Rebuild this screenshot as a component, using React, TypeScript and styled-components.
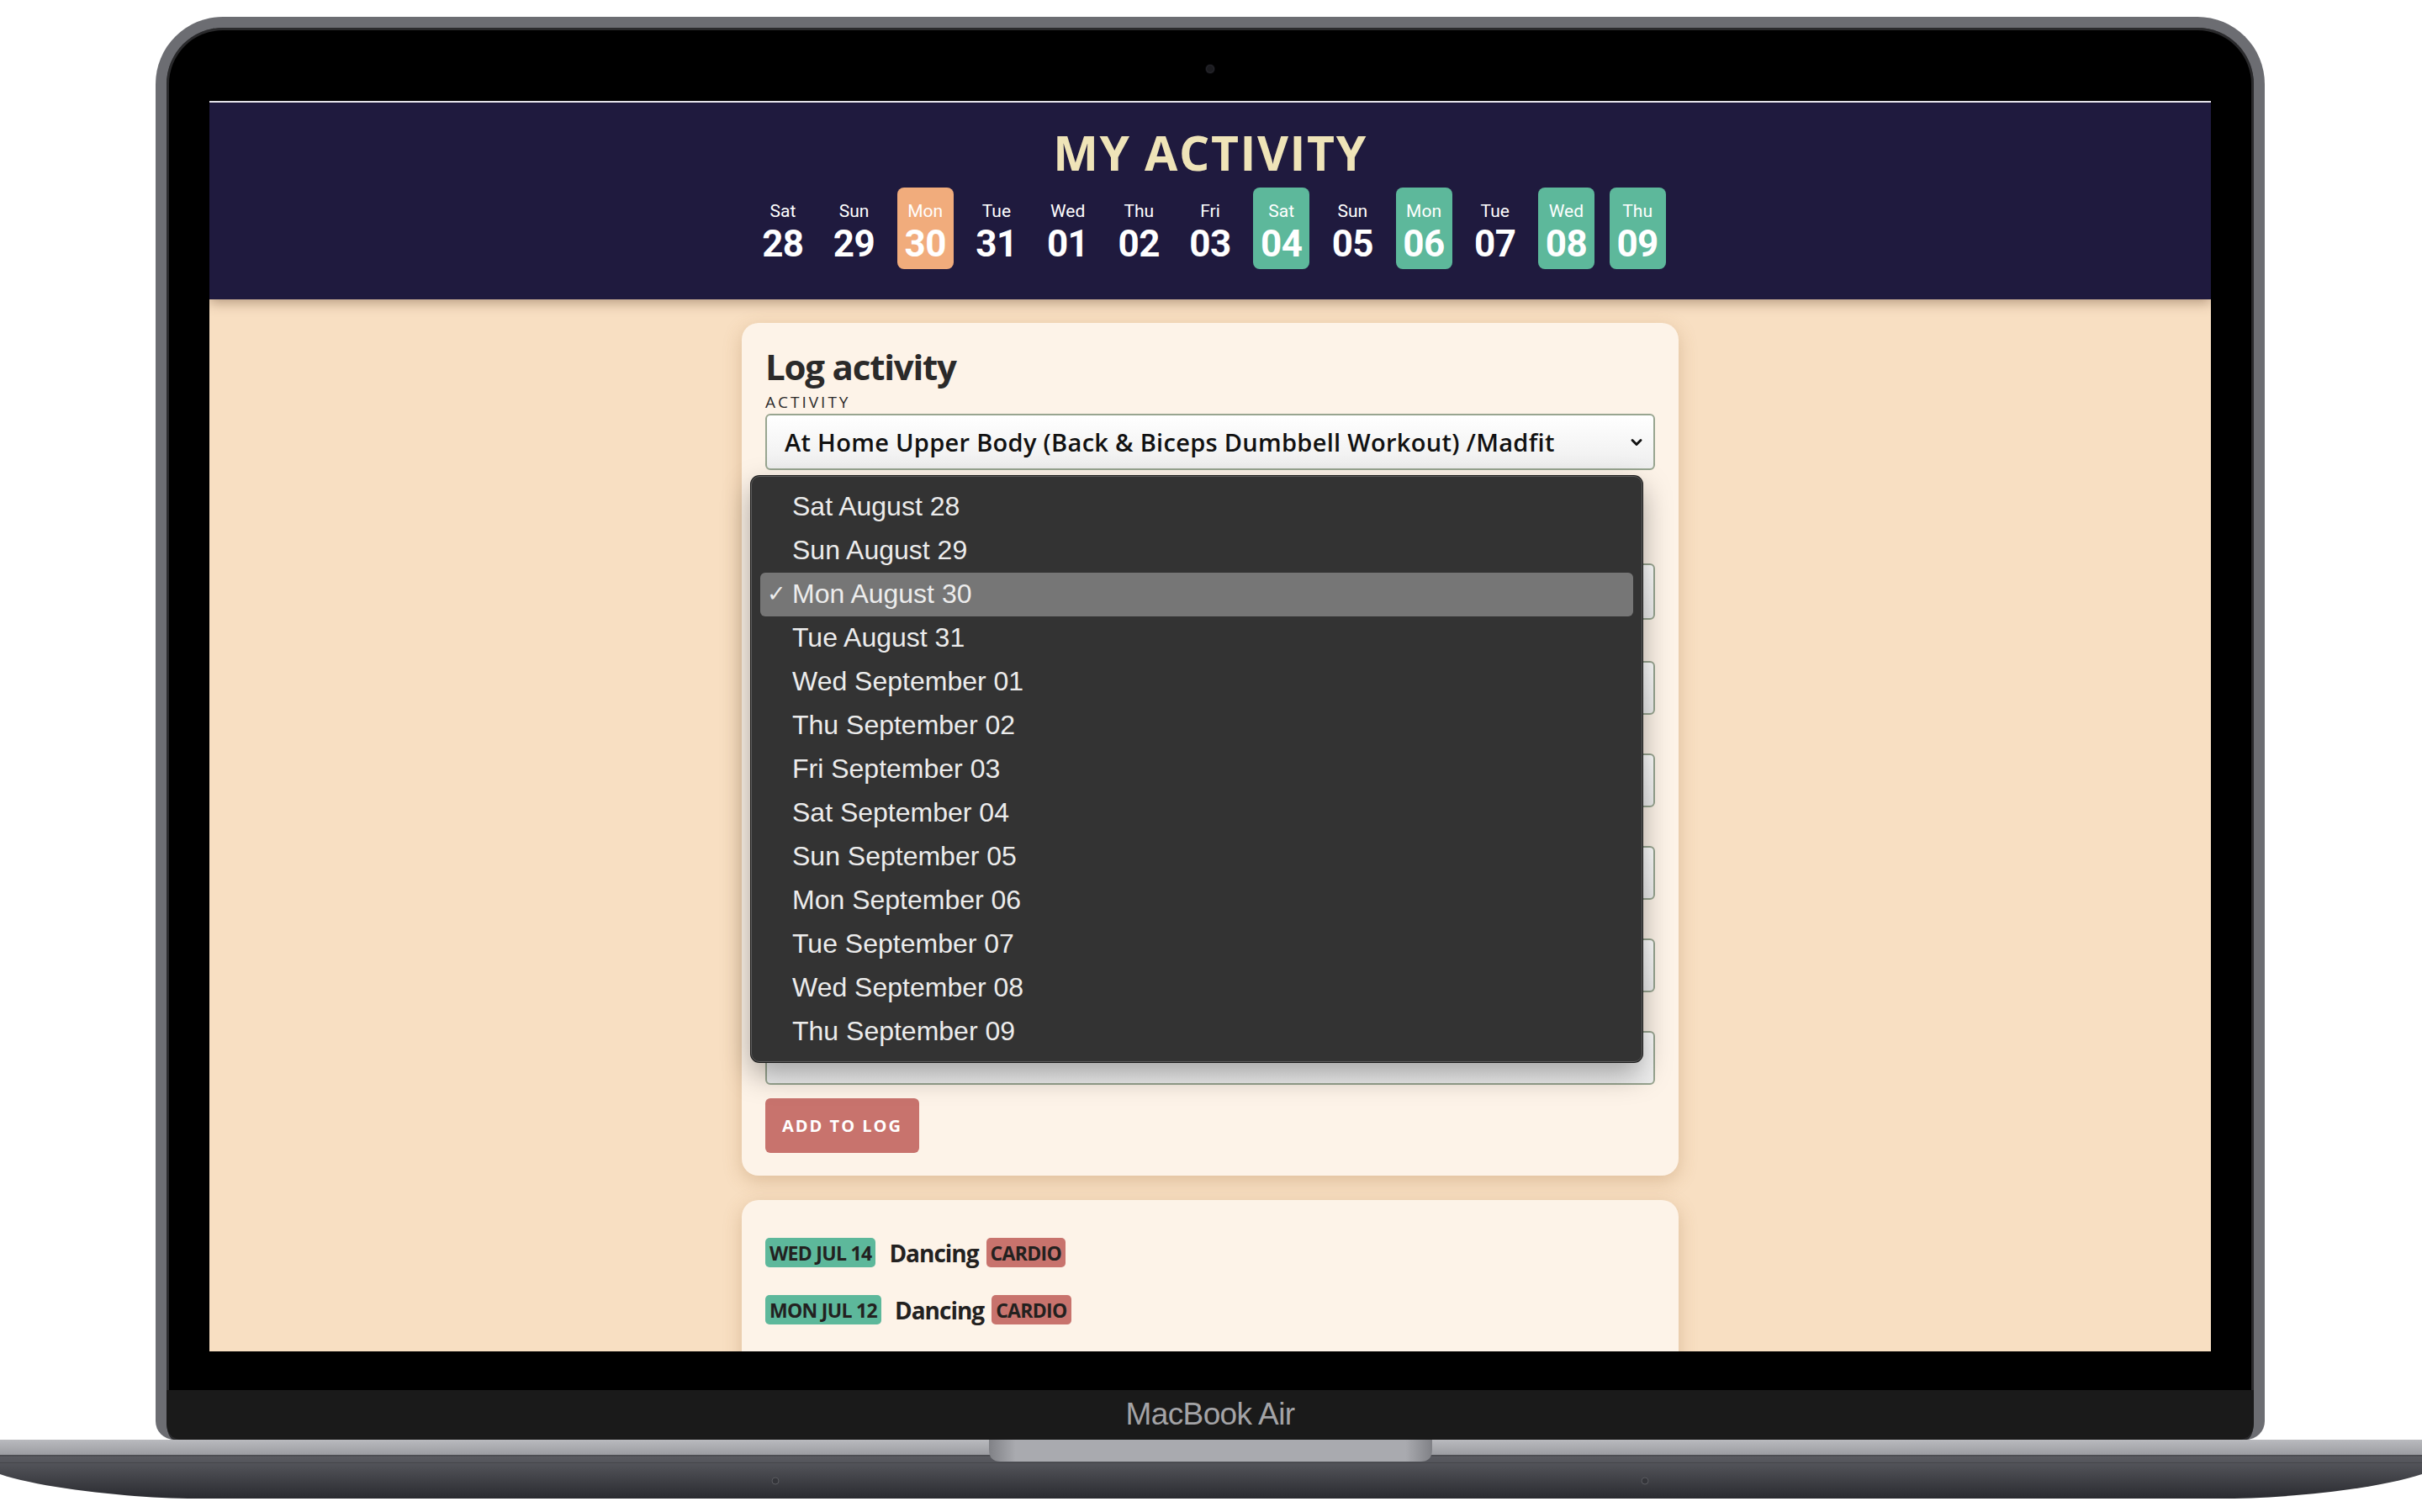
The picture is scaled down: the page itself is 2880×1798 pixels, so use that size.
import React from "react";
import styled, { createGlobalStyle } from "styled-components";
import { ChevronDown } from "lucide-react";

const GlobalStyle = createGlobalStyle`
  html, body { margin: 0; padding: 0; background: #ffffff; }
  body { width: 2880px; height: 1798px; overflow: hidden; }
  * { box-sizing: border-box; }
`;

const UI = `"Open Sans", "Noto Sans", sans-serif`;
const CHIP = `Roboto, "Open Sans", sans-serif`;
const SYS = `"Liberation Sans", Arial, sans-serif`;

const Stage = styled.div`
  width: 2880px;
  height: 1798px;
  background: #ffffff;
  display: flex;
  flex-direction: column;
  align-items: center;
`;

const Lid = styled.div`
  width: 2508px;
  height: 1692px;
  margin: 20px 2px 0 0;
  border: 13px solid #6c6d72;
  border-bottom: 0;
  border-radius: 80px 80px 22px 22px;
  background: #000;
  box-shadow: inset 0 0 0 3px #2a2a2c;
  display: flex;
  flex-direction: column;
  align-items: stretch;
  overflow: hidden;
`;

const CameraBar = styled.div`
  height: 87px;
  display: flex;
  justify-content: center;
  padding-top: 44px;
`;

const Camera = styled.div`
  width: 10px;
  height: 10px;
  border-radius: 50%;
  background: #1b1b1f;
  box-shadow: 0 0 0 1px #0c0c0e, inset 0 0 2px #3a3a44;
`;

const Screen = styled.div`
  height: 1487px;
  margin: 0 51px;
  background: #f8dfc2;
  overflow: hidden;
  display: flex;
  flex-direction: column;
  position: relative;
`;

const BlackGap = styled.div`
  height: 46px;
`;

const Chin = styled.div`
  height: 59px;
  background: #1a1a1a;
  border-radius: 0 0 18px 18px;
  display: flex;
  align-items: center;
  justify-content: center;
  font-family: ${SYS};
  font-size: 37px;
  letter-spacing: -0.6px;
  color: #a3a3a6;
  padding-bottom: 2px;
`;

const BaseSvg = styled.svg`
  display: block;
  flex: none;
`;

/* ---------- header ---------- */
const Header = styled.header`
  border-top: 2px solid #e4e2e9;
  background: #1f1a3e;
  padding: 31px 0 36px;
  display: flex;
  flex-direction: column;
  align-items: center;
  gap: 13px;
  box-shadow: 0 4px 14px rgba(60, 30, 10, 0.35);
  position: relative;
  z-index: 1;
`;

const Title = styled.h1`
  margin: 0;
  font-family: ${UI};
  font-weight: 700;
  font-size: 57px;
  line-height: 57px;
  color: #efe4b8;
  letter-spacing: 1.6px;
`;

const DayRow = styled.div`
  display: flex;
  gap: 17.7px;
`;

const DayChip = styled.div<{ $tone?: "today" | "done" }>`
  width: 67px;
  height: 97px;
  border-radius: 8px;
  padding-top: 16px;
  display: flex;
  flex-direction: column;
  align-items: center;
  gap: 5px;
  background: ${(p) =>
    p.$tone === "today" ? "#f1ac7c" : p.$tone === "done" ? "#5db89b" : "transparent"};
  color: #ffffff;
  font-family: ${CHIP};
`;

const DayName = styled.span`
  font-size: 21px;
  line-height: 24px;
  font-weight: 400;
`;

const DayNum = styled.span`
  font-size: 44px;
  line-height: 44px;
  font-weight: 700;
  letter-spacing: -0.5px;
`;

/* ---------- main ---------- */
const Main = styled.main`
  padding-top: 28px;
  display: flex;
  flex-direction: column;
  align-items: center;
  gap: 29px;
`;

const Card = styled.section<{ $grow?: boolean }>`
  width: 1114px;
  background: #fdf3e8;
  border-radius: 20px;
  box-shadow: 0 6px 22px rgba(150, 100, 50, 0.28);
  padding: 28px 28px 27px;
  position: relative;
  ${(p) => (p.$grow ? "min-height: 400px; padding-top: 45px;" : "")}
`;

const CardTitle = styled.h2`
  margin: 0 0 8px;
  font-family: ${UI};
  font-size: 42px;
  line-height: 48px;
  font-weight: 700;
  color: #2b2a2a;
  letter-spacing: -1.2px;
`;

const FieldLabel = styled.div<{ $top?: number }>`
  margin-top: ${(p) => p.$top ?? 0}px;
  height: 20px;
  font-family: ${UI};
  font-size: 19px;
  line-height: 20px;
  font-weight: 500;
  letter-spacing: 3px;
  color: #2b2a2a;
  text-transform: uppercase;
`;

const SelectBox = styled.div<{ $h?: number }>`
  margin-top: 4px;
  height: ${(p) => p.$h ?? 67}px;
  border: 2px solid #98a590;
  border-radius: 6px;
  background: linear-gradient(#ffffff, #eeeeee);
  display: flex;
  align-items: center;
  justify-content: space-between;
  padding: 0 10px 0 21px;
  font-family: ${UI};
  font-size: 29px;
  font-weight: 600;
  color: #111111;
  letter-spacing: 0.3px;
`;

const AddButton = styled.button`
  margin-top: 16px;
  width: 183px;
  height: 65px;
  border: 0;
  border-radius: 6px;
  background: #c8736d;
  color: #ffffff;
  font-family: ${UI};
  font-weight: 700;
  font-size: 20px;
  letter-spacing: 2px;
  display: flex;
  align-items: center;
  justify-content: center;
`;

/* ---------- dropdown ---------- */
const Dropdown = styled.div`
  position: absolute;
  left: 11px;
  top: 182px;
  width: 1060px;
  height: 697px;
  background: #333333;
  border: 1px solid #5c5c5c;
  border-radius: 10px;
  box-shadow: 0 0 0 1px #1a1a1a, 0 14px 34px rgba(0, 0, 0, 0.35);
  padding: 10px 10px;
  display: flex;
  flex-direction: column;
  z-index: 5;
`;

const Option = styled.div<{ $selected?: boolean }>`
  height: 52px;
  border-radius: 6px;
  display: flex;
  align-items: center;
  padding-left: 38px;
  position: relative;
  background: ${(p) => (p.$selected ? "#767676" : "transparent")};
  font-family: ${SYS};
  font-size: 32px;
  color: #ececec;
`;

const Check = styled.span`
  position: absolute;
  left: 8px;
  top: 9px;
  font-family: "DejaVu Sans", sans-serif;
  font-size: 27px;
  line-height: 32px;
`;

/* ---------- log list ---------- */
const LogRow = styled.div`
  display: flex;
  align-items: center;
  height: 35px;
  margin-bottom: 33px;
`;

const Tag = styled.span<{ $tone: "date" | "type" }>`
  height: 35px;
  border-radius: 5px;
  padding: 0 5px;
  display: inline-flex;
  align-items: center;
  background: ${(p) => (p.$tone === "date" ? "#5db89b" : "#c8736d")};
  color: #23211f;
  font-family: ${UI};
  font-weight: 700;
  font-size: 23px;
  letter-spacing: -0.7px;
`;

const ActivityName = styled.span`
  font-family: ${UI};
  font-weight: 700;
  font-size: 28px;
  color: #232120;
  margin: 0 9px 0 16px;
  letter-spacing: -1px;
`;

const days: { d: string; n: string; tone?: "today" | "done" }[] = [
  { d: "Sat", n: "28" },
  { d: "Sun", n: "29" },
  { d: "Mon", n: "30", tone: "today" },
  { d: "Tue", n: "31" },
  { d: "Wed", n: "01" },
  { d: "Thu", n: "02" },
  { d: "Fri", n: "03" },
  { d: "Sat", n: "04", tone: "done" },
  { d: "Sun", n: "05" },
  { d: "Mon", n: "06", tone: "done" },
  { d: "Tue", n: "07" },
  { d: "Wed", n: "08", tone: "done" },
  { d: "Thu", n: "09", tone: "done" },
];

const options = [
  "Sat August 28",
  "Sun August 29",
  "Mon August 30",
  "Tue August 31",
  "Wed September 01",
  "Thu September 02",
  "Fri September 03",
  "Sat September 04",
  "Sun September 05",
  "Mon September 06",
  "Tue September 07",
  "Wed September 08",
  "Thu September 09",
];

/* fields hidden under the open date menu: only their right edges show */
const hiddenFields = [25, 22, 22, 22, 22];

const logs = [
  { date: "WED JUL 14", name: "Dancing", type: "CARDIO" },
  { date: "MON JUL 12", name: "Dancing", type: "CARDIO" },
];

function LaptopBase() {
  return (
    <BaseSvg width="2880" height="70" viewBox="0 0 2880 70">
      <defs>
        <linearGradient id="baseBody" x1="0" y1="0" x2="0" y2="1">
          <stop offset="0" stopColor="#6c6d73" />
          <stop offset="0.35" stopColor="#56575d" />
          <stop offset="1" stopColor="#2a2b30" />
        </linearGradient>
        <linearGradient id="baseTop" x1="0" y1="0" x2="0" y2="1">
          <stop offset="0" stopColor="#b9babe" />
          <stop offset="1" stopColor="#9c9da2" />
        </linearGradient>
        <linearGradient id="notch" x1="0" y1="0" x2="1" y2="0">
          <stop offset="0" stopColor="#808186" />
          <stop offset="0.06" stopColor="#a9aaaf" />
          <stop offset="0.94" stopColor="#a9aaaf" />
          <stop offset="1" stopColor="#808186" />
        </linearGradient>
      </defs>
      <path d="M0 0H2880V41C2830 58 2720 70 2647 70H233C160 70 50 58 0 41Z" fill="url(#baseBody)" />
      <rect x="0" y="0" width="2880" height="18" fill="url(#baseTop)" />
      <rect x="0" y="18" width="2880" height="2" fill="#4d4e53" />
      <rect x="0" y="27" width="2880" height="1" fill="#45464b" />
      <path d="M1176 0H1703V12Q1703 26 1689 26H1190Q1176 26 1176 12Z" fill="url(#notch)" />
      <circle cx="922" cy="49" r="4" fill="#34353a" stroke="#5a5b60" strokeWidth="1" />
      <circle cx="1956" cy="49" r="4" fill="#34353a" stroke="#5a5b60" strokeWidth="1" />
    </BaseSvg>
  );
}

export default function App() {
  return (
    <>
      <GlobalStyle />
      <Stage>
        <Lid>
          <CameraBar>
            <Camera />
          </CameraBar>
          <Screen>
            <Header>
              <Title>MY ACTIVITY</Title>
              <DayRow>
                {days.map((day, i) => (
                  <DayChip key={i} $tone={day.tone}>
                    <DayName>{day.d}</DayName>
                    <DayNum>{day.n}</DayNum>
                  </DayChip>
                ))}
              </DayRow>
            </Header>
            <Main>
              <Card>
                <CardTitle>Log activity</CardTitle>
                <FieldLabel>Activity</FieldLabel>
                <SelectBox>
                  <span>At Home Upper Body (Back &amp; Biceps Dumbbell Workout) /Madfit</span>
                  <ChevronDown size={20} strokeWidth={3.5} color="#111" />
                </SelectBox>
                <FieldLabel $top={87} aria-hidden />
                <SelectBox>
                  <span />
                  <ChevronDown size={20} strokeWidth={3.5} color="#111" />
                </SelectBox>
                {hiddenFields.map((top, i) => (
                  <React.Fragment key={i}>
                    <FieldLabel $top={top} aria-hidden />
                    <SelectBox $h={64} />
                  </React.Fragment>
                ))}
                <AddButton>ADD TO LOG</AddButton>
                <Dropdown>
                  {options.map((o, i) => (
                    <Option key={o} $selected={i === 2}>
                      {i === 2 && <Check>✓</Check>}
                      {o}
                    </Option>
                  ))}
                </Dropdown>
              </Card>
              <Card $grow>
                {logs.map((l, i) => (
                  <LogRow key={i}>
                    <Tag $tone="date">{l.date}</Tag>
                    <ActivityName>{l.name}</ActivityName>
                    <Tag $tone="type">{l.type}</Tag>
                  </LogRow>
                ))}
              </Card>
            </Main>
          </Screen>
          <BlackGap />
          <Chin>MacBook Air</Chin>
        </Lid>
        <LaptopBase />
      </Stage>
    </>
  );
}
